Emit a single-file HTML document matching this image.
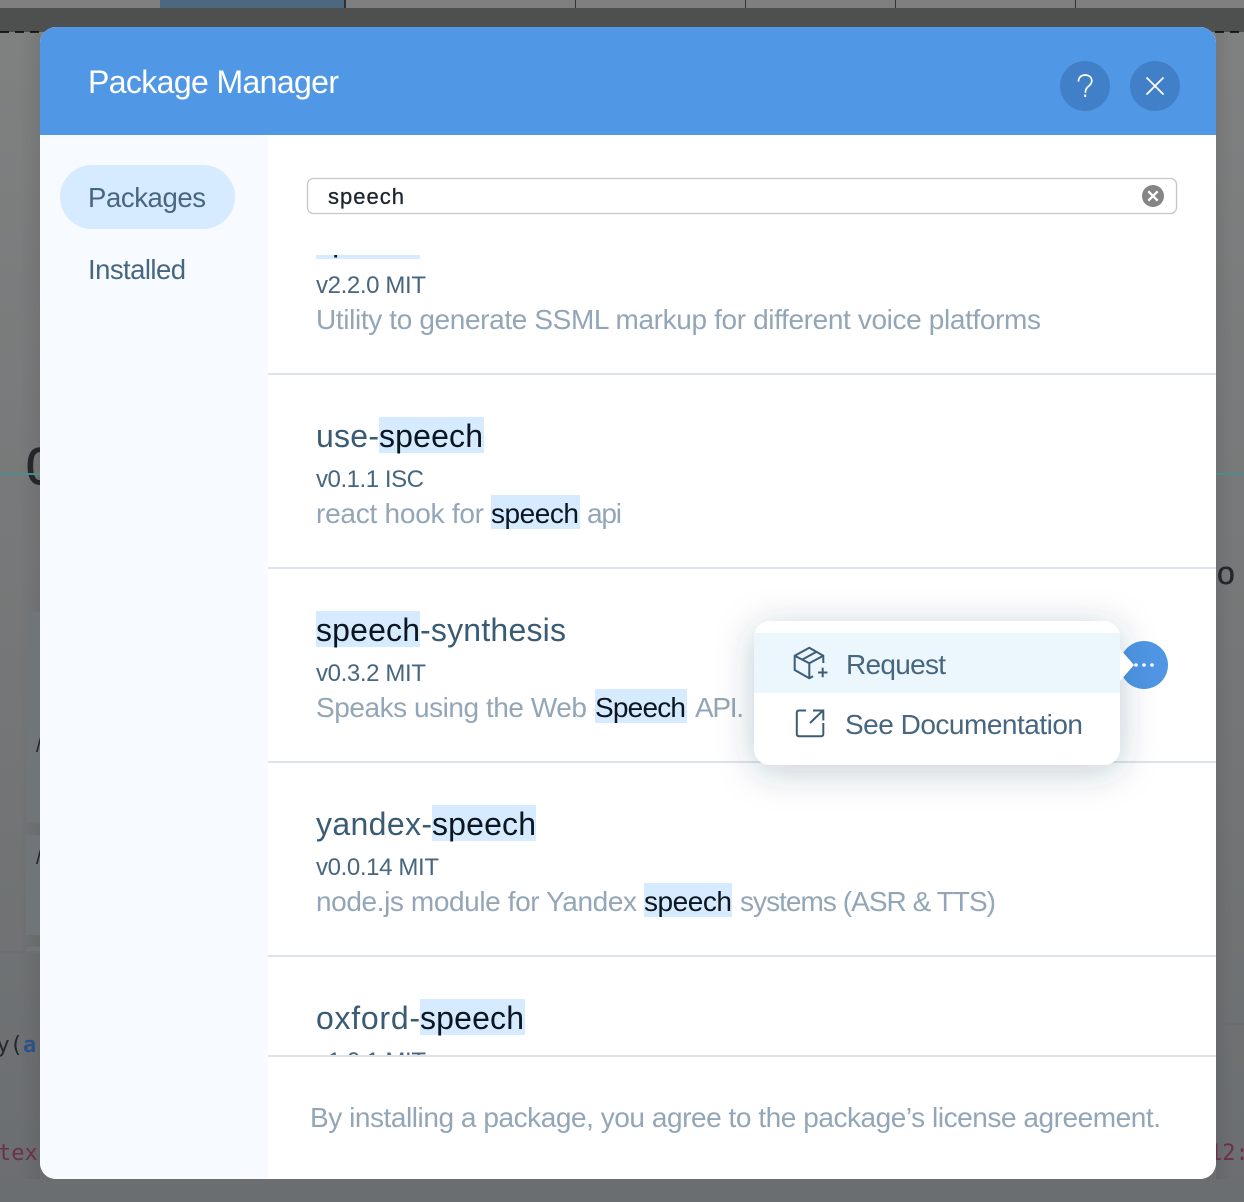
<!DOCTYPE html>
<html><head><meta charset="utf-8"><title>Package Manager</title>
<style>
html,body{margin:0;padding:0;width:1244px;height:1202px;overflow:hidden;background:#777}
svg{display:block}
text{font-family:"Liberation Sans",sans-serif;white-space:pre}
.t{font-size:32px;fill:#3a5b74}
.v{font-size:24px;fill:#47667f}
.d{font-size:28px;fill:#93a6b8}
.m{font-size:28px;fill:#47667f}
.k{fill:#0b1620}
.bgc{font-family:"DejaVu Sans Mono","Liberation Mono",monospace;font-size:22px}
</style></head><body>
<svg width="1244" height="1202" viewBox="0 0 1244 1202" xmlns="http://www.w3.org/2000/svg">
<defs>
<linearGradient id="bg" x1="0" y1="0" x2="0" y2="1"><stop offset="0" stop-color="#808181"/><stop offset="1" stop-color="#6b6e70"/></linearGradient>
<linearGradient id="ls" x1="0" y1="0" x2="1" y2="0"><stop offset="0" stop-color="#000" stop-opacity="0"/><stop offset=".5" stop-color="#000" stop-opacity="0"/><stop offset="1" stop-color="#000" stop-opacity=".07"/></linearGradient>
<linearGradient id="rs" x1="0" y1="0" x2="1" y2="0"><stop offset="0" stop-color="#000" stop-opacity=".07"/><stop offset=".6" stop-color="#000" stop-opacity="0"/></linearGradient>
<clipPath id="modal"><rect x="40" y="27" width="1176" height="1152" rx="16"/></clipPath>
<clipPath id="list"><rect x="268" y="255" width="948" height="801"/></clipPath>
<filter id="pop" x="-20%" y="-50%" width="140%" height="210%"><feDropShadow dx="0" dy="6" stdDeviation="18" flood-color="#1d3a55" flood-opacity=".26"/></filter>
</defs>

<!-- dimmed background -->
<rect width="1244" height="1202" fill="url(#bg)"/>
<rect x="0" y="0" width="1244" height="8" fill="#7f7f7f"/>
<rect x="160" y="0" width="185" height="8" fill="#4c6880"/>
<rect x="344" y="0" width="2" height="8" fill="#2f3030"/>
<rect x="575" y="0" width="1" height="8" fill="#333"/>
<rect x="745" y="0" width="1" height="8" fill="#333"/>
<rect x="895" y="0" width="1" height="8" fill="#333"/>
<rect x="1075" y="0" width="1" height="8" fill="#333"/>
<rect x="0" y="8" width="1244" height="24" fill="#4e4f4f"/>
<line x1="0" y1="32" x2="1244" y2="32" stroke="#000" stroke-width="1.5" stroke-dasharray="9 6"/>
<rect x="0" y="33" width="40" height="1146" fill="url(#ls)"/>
<rect x="1216" y="33" width="28" height="1146" fill="url(#rs)"/>
<rect x="26" y="612" width="14" height="210" fill="#6f7579"/>
<rect x="26" y="835" width="14" height="100" fill="#6f7579"/>
<rect x="26" y="947" width="14" height="5" fill="#6f7579"/>
<text x="26" y="484" font-size="52" fill="#24272a" stroke="#24272a" stroke-width="1">0</text>
<rect x="0" y="473" width="40" height="2" fill="#4f8a88"/>
<rect x="1216" y="473" width="28" height="2" fill="#4f8a88"/>
<text x="1217" y="584" font-size="32" fill="#24272a" stroke="#24272a" stroke-width=".4">o</text>
<text x="36" y="752" font-size="20" fill="#222">/</text>
<text x="36" y="864" font-size="20" fill="#222">/</text>
<rect x="0" y="951" width="40" height="2" fill="#6c6e70"/>
<rect x="1216" y="1023" width="28" height="2" fill="#696b6e"/>
<text class="bgc" x="-3.500" y="1052" fill="#22282d">y(<tspan fill="#2b5285" font-weight="bold">a</tspan></text>
<text class="bgc" x="-2" y="1160" fill="#6f2f47">tex</text>
<text class="bgc" x="1209" y="1160" fill="#6f2f47">12:</text>

<!-- modal -->
<g clip-path="url(#modal)">
<rect x="40" y="27" width="1176" height="1152" fill="#fff"/>
<rect x="40" y="27" width="1176" height="108" fill="#5098e5"/>
<rect x="40" y="135" width="228" height="1044" fill="#f7faff"/>

<g clip-path="url(#list)">
<rect x="316" y="223" width="104" height="36" fill="#d6ebff"/>
<text class="t k" x="316" y="251" textLength="104">speech</text>
<text class="v" x="316" y="293" textLength="110">v2.2.0 MIT</text>
<text class="d" x="316" y="329" textLength="725">Utility to generate SSML markup for different voice platforms</text>
<rect x="268" y="373" width="948" height="2" fill="#dde3e9"/>

<rect x="379" y="417" width="105" height="36" fill="#d6ebff"/>
<text class="t" x="316" y="447" textLength="63">use-</text>
<text class="t k" x="379" y="447" textLength="104">speech</text>
<text class="v" x="316" y="487" textLength="108">v0.1.1 ISC</text>
<text class="d" x="316" y="523" textLength="168">react hook for</text>
<rect x="491" y="495" width="89" height="34" fill="#d6ebff"/>
<text class="d k" x="491" y="523" textLength="88">speech</text>
<text class="d" x="587" y="523" textLength="35">api</text>
<rect x="268" y="567" width="948" height="2" fill="#dde3e9"/>

<rect x="316" y="611" width="104" height="36" fill="#d6ebff"/>
<text class="t k" x="316" y="641" textLength="104">speech</text>
<text class="t" x="420" y="641" textLength="146">-synthesis</text>
<text class="v" x="316" y="681" textLength="110">v0.3.2 MIT</text>
<text class="d" x="316" y="717" textLength="271">Speaks using the Web</text>
<rect x="595" y="689" width="92" height="34" fill="#d6ebff"/>
<text class="d k" x="595" y="717" textLength="91">Speech</text>
<text class="d" x="695" y="717" textLength="49">API.</text>
<rect x="268" y="761" width="948" height="2" fill="#dde3e9"/>

<rect x="432" y="805" width="104" height="36" fill="#d6ebff"/>
<text class="t" x="316" y="835" textLength="116">yandex-</text>
<text class="t k" x="432" y="835" textLength="104">speech</text>
<text class="v" x="316" y="875" textLength="123">v0.0.14 MIT</text>
<text class="d" x="316" y="911" textLength="321">node.js module for Yandex</text>
<rect x="644" y="883" width="88" height="34" fill="#d6ebff"/>
<text class="d k" x="644" y="911" textLength="88">speech</text>
<text class="d" x="740" y="911" textLength="256">systems (ASR &amp; TTS)</text>
<rect x="268" y="955" width="948" height="2" fill="#dde3e9"/>

<rect x="420" y="999" width="105" height="36" fill="#d6ebff"/>
<text class="t" x="316" y="1029" textLength="104">oxford-</text>
<text class="t k" x="420" y="1029" textLength="104">speech</text>
<text class="v" x="316" y="1069" textLength="110">v1.0.1 MIT</text>
</g>

<rect x="268" y="1055" width="948" height="124" fill="#fff"/>
<rect x="268" y="1055" width="948" height="2" fill="#dde3e9"/>
<text class="d" x="310" y="1127" textLength="851">By installing a package, you agree to the package’s license agreement.</text>
</g>

<!-- header -->
<text x="88" y="93" font-size="32" fill="#fff" textLength="251">Package Manager</text>
<circle cx="1085" cy="86" r="25" fill="#4180c8"/>
<circle cx="1155" cy="86" r="25" fill="#4180c8"/>
<path d="M1078.500 81.500c0-4.200 3-6.500 6.700-6.500 3.700 0 6.600 2.300 6.600 5.800 0 2.500-1.200 3.800-3.200 5.400-2 1.600-3.100 2.900-3.100 5.600v1" fill="none" stroke="#fff" stroke-width="1.700"/>
<rect x="1084.200" y="94.500" width="2" height="2.500" fill="#fff"/>
<path d="M1146.500 77.500L1163.500 94.500M1163.500 77.500L1146.500 94.500" fill="none" stroke="#fff" stroke-width="1.800"/>

<!-- sidebar -->
<rect x="60" y="165" width="175" height="64" rx="32" fill="#d6ebff"/>
<text x="88" y="207" font-size="27.500" fill="#47667f" textLength="118">Packages</text>
<text x="88" y="279" font-size="27.500" fill="#47667f" textLength="98">Installed</text>

<!-- search -->
<rect x="307.500" y="178.500" width="869" height="35" rx="6" fill="#fff" stroke="#c6c6c6" stroke-width="1.300"/>
<text x="328" y="204" font-size="22" fill="#1d2630" stroke="#1d2630" stroke-width=".3" textLength="76">speech</text>
<circle cx="1153" cy="196" r="11" fill="#858585"/>
<path d="M1148.300 191.300L1157.700 200.700M1157.700 191.300L1148.300 200.700" stroke="#fff" stroke-width="2.400" fill="none"/>

<!-- more button and popover -->
<circle cx="1144" cy="665" r="24" fill="#4f96e4"/>
<rect x="754" y="621" width="366" height="144" rx="16" fill="#fff" filter="url(#pop)"/>
<rect x="754" y="633" width="366" height="60" fill="#ebf6fd"/>
<path d="M1120 649L1134 665L1120 681Z" fill="#fff"/>
<circle cx="1136" cy="665" r="1.800" fill="#fff"/>
<circle cx="1144" cy="665" r="1.800" fill="#fff"/>
<circle cx="1152" cy="665" r="1.800" fill="#fff"/>

<path d="M823.300 663V655.700L809.300 647.700L794.700 655.700V670L809.300 678.300L813 676.200M794.700 655.700L809.300 663.300L823.300 655.700M809.300 663.300V678.300M802 659.800L816.500 651.800" fill="none" stroke="#3c5d78" stroke-width="2" stroke-linejoin="round"/>
<path d="M818 672.500H827.500M822.700 667.800V677.300" fill="none" stroke="#3c5d78" stroke-width="2"/>
<text class="m" x="846" y="674" textLength="100">Request</text>

<path d="M806 710.500H799C797.600 710.500 796.800 711.300 796.800 712.700V734C796.800 735.400 797.600 736.200 799 736.200H821C822.400 736.200 823.300 735.400 823.300 734V723" fill="none" stroke="#3c5d78" stroke-width="2"/>
<path d="M810 723L823 710.500M813 710.500H823.300V720.500" fill="none" stroke="#3c5d78" stroke-width="2"/>
<text class="m" x="845" y="734" textLength="238">See Documentation</text>
</svg>
</body></html>
